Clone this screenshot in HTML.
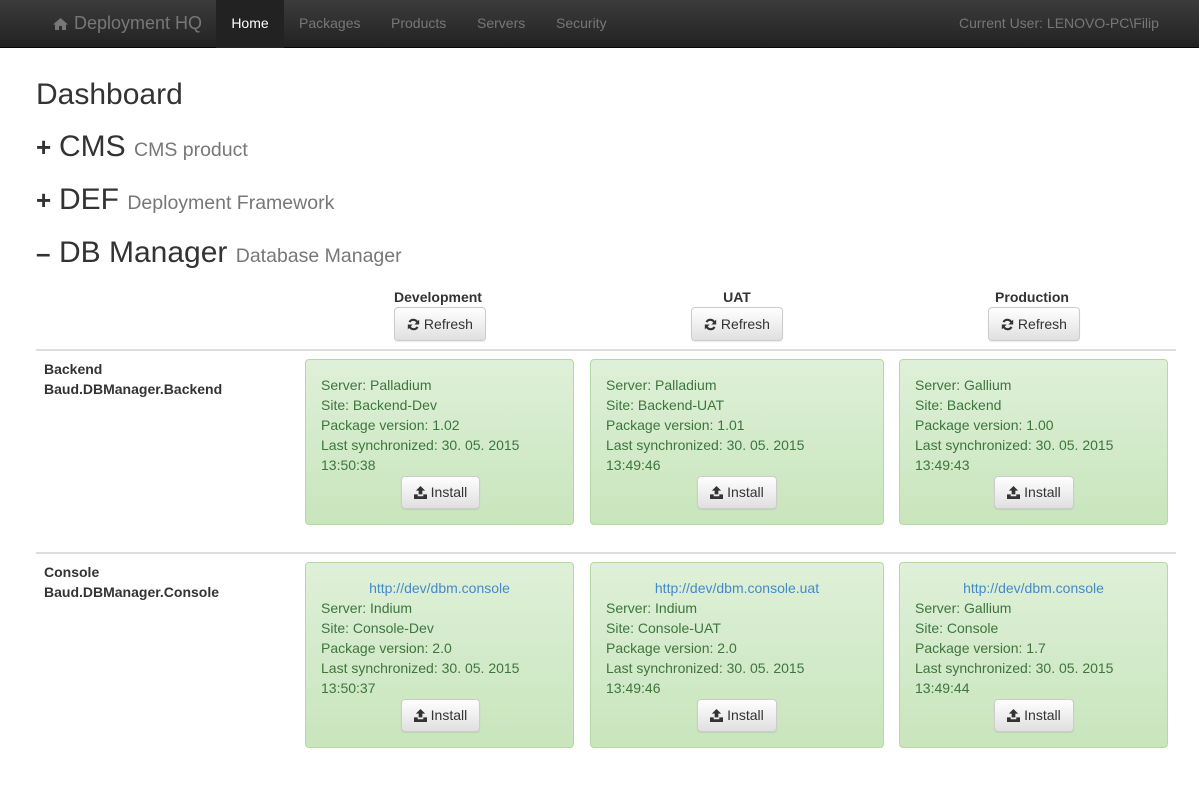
<!DOCTYPE html>
<html><head><meta charset="utf-8"><style>
*{box-sizing:border-box;margin:0;padding:0}
body{width:1199px;height:785px;background:#fff;font-family:"Liberation Sans",Arial,sans-serif;font-size:14px;color:#333;position:relative;overflow:hidden}
.nav{position:absolute;left:0;top:0;width:1199px;height:48px;background:linear-gradient(#3c3c3c,#222);border-bottom:1px solid #080808}
.nav span{position:absolute;top:0;line-height:47px;color:#777;font-size:14px}
h1{position:absolute;left:36px;top:78px;font-size:30px;font-weight:normal;color:#333;line-height:34px}
.h{position:absolute;left:36px;font-size:30px;line-height:34px;color:#333;white-space:nowrap}
.h small{font-size:19.5px;color:#777}
.h b{font-size:26px;display:inline-block;width:23px}
.col{position:absolute;top:288px;text-align:center;font-weight:bold;font-size:14px;line-height:18px}
.btn{position:absolute;background:linear-gradient(#fff,#e0e0e0);border:1px solid #ccc;border-radius:4px;box-shadow:0 1px 1px rgba(0,0,0,.08);font-size:14px;color:#333;text-align:center;font-weight:normal}
.line{position:absolute;left:36px;width:1140px;height:2px;background:#ddd}
.p{position:absolute;background:linear-gradient(#dff0d8,#c8e5bc);border:1px solid #b2dba1;border-radius:4px;color:#3c763d;line-height:20px;padding-left:15px}
.lk{text-align:center;color:#428bca;margin-left:-15px}
.lab{position:absolute;left:44px;font-weight:bold;line-height:20px}
svg{vertical-align:-2px}
</style></head><body>
<div class="nav">
<span style="left:52px;font-size:18px;"><svg width="17" height="14" viewBox="0 0 17 14"><path d="M8.5 1 L1 7.5 H3 V13 H7 V9 H10 V13 H14 V7.5 H16 Z" fill="#777"/></svg> Deployment HQ</span>
<span style="left:216px;width:68px;height:48px;background:#222;color:#fff;text-align:center">Home</span>
<span style="left:299px">Packages</span>
<span style="left:391px">Products</span>
<span style="left:477px">Servers</span>
<span style="left:556px">Security</span>
<span style="left:959px">Current User: LENOVO-PC\Filip</span>
</div>
<h1>Dashboard</h1>
<div class="h" style="top:130px"><b>+</b>CMS <small>CMS product</small></div>
<div class="h" style="top:183px"><b>+</b>DEF <small>Deployment Framework</small></div>
<div class="h" style="top:236px"><b>–</b>DB Manager <small>Database Manager</small></div>

<div class="col" style="left:378px;width:120px">Development</div>
<div class="col" style="left:677px;width:120px">UAT</div>
<div class="col" style="left:972px;width:120px">Production</div>
<div class="btn" style="left:394px;top:307px;width:92px;height:34px;line-height:32px"><svg width="13" height="13" viewBox="0 0 16 16"><path d="M13 6A5.5 5.5 0 0 0 3 5M3 10a5.5 5.5 0 0 0 10 1" stroke="#333" stroke-width="2.6" fill="none"/><path d="M15 2v6h-6zM1 14V8h6z" fill="#333"/></svg> Refresh</div>
<div class="btn" style="left:691px;top:307px;width:92px;height:34px;line-height:32px"><svg width="13" height="13" viewBox="0 0 16 16"><path d="M13 6A5.5 5.5 0 0 0 3 5M3 10a5.5 5.5 0 0 0 10 1" stroke="#333" stroke-width="2.6" fill="none"/><path d="M15 2v6h-6zM1 14V8h6z" fill="#333"/></svg> Refresh</div>
<div class="btn" style="left:988px;top:307px;width:92px;height:34px;line-height:32px"><svg width="13" height="13" viewBox="0 0 16 16"><path d="M13 6A5.5 5.5 0 0 0 3 5M3 10a5.5 5.5 0 0 0 10 1" stroke="#333" stroke-width="2.6" fill="none"/><path d="M15 2v6h-6zM1 14V8h6z" fill="#333"/></svg> Refresh</div>

<div class="line" style="top:349px"></div>
<div class="lab" style="top:359px">Backend<br>Baud.DBManager.Backend</div>
<div class="p" style="left:305px;top:359px;width:269px;height:166px;padding-top:15px">Server: Palladium<br>Site: Backend-Dev<br>Package version: 1.02<br>Last synchronized: 30. 05. 2015<br>13:50:38</div>
<div class="p" style="left:590px;top:359px;width:294px;height:166px;padding-top:15px">Server: Palladium<br>Site: Backend-UAT<br>Package version: 1.01<br>Last synchronized: 30. 05. 2015<br>13:49:46</div>
<div class="p" style="left:899px;top:359px;width:269px;height:166px;padding-top:15px">Server: Gallium<br>Site: Backend<br>Package version: 1.00<br>Last synchronized: 30. 05. 2015<br>13:49:43</div>

<div class="line" style="top:552px"></div>
<div class="lab" style="top:562px">Console<br>Baud.DBManager.Console</div>
<div class="p" style="left:305px;top:562px;width:269px;height:186px;padding-top:15px"><div class="lk">http://dev/dbm.console</div>Server: Indium<br>Site: Console-Dev<br>Package version: 2.0<br>Last synchronized: 30. 05. 2015<br>13:50:37</div>
<div class="p" style="left:590px;top:562px;width:294px;height:186px;padding-top:15px"><div class="lk">http://dev/dbm.console.uat</div>Server: Indium<br>Site: Console-UAT<br>Package version: 2.0<br>Last synchronized: 30. 05. 2015<br>13:49:46</div>
<div class="p" style="left:899px;top:562px;width:269px;height:186px;padding-top:15px"><div class="lk">http://dev/dbm.console</div>Server: Gallium<br>Site: Console<br>Package version: 1.7<br>Last synchronized: 30. 05. 2015<br>13:49:44</div>

<div class="btn" style="left:401px;top:476px;width:79px;height:33px;line-height:31px"><svg width="13" height="13" viewBox="0 0 14 14"><path d="M7 0L2 5h3v4h4V5h3z M0 9h4v2h6V9h4v5H0z" fill="#333"/></svg> Install</div>
<div class="btn" style="left:697px;top:476px;width:80px;height:33px;line-height:31px"><svg width="13" height="13" viewBox="0 0 14 14"><path d="M7 0L2 5h3v4h4V5h3z M0 9h4v2h6V9h4v5H0z" fill="#333"/></svg> Install</div>
<div class="btn" style="left:994px;top:476px;width:80px;height:33px;line-height:31px"><svg width="13" height="13" viewBox="0 0 14 14"><path d="M7 0L2 5h3v4h4V5h3z M0 9h4v2h6V9h4v5H0z" fill="#333"/></svg> Install</div>
<div class="btn" style="left:401px;top:699px;width:79px;height:33px;line-height:31px"><svg width="13" height="13" viewBox="0 0 14 14"><path d="M7 0L2 5h3v4h4V5h3z M0 9h4v2h6V9h4v5H0z" fill="#333"/></svg> Install</div>
<div class="btn" style="left:697px;top:699px;width:80px;height:33px;line-height:31px"><svg width="13" height="13" viewBox="0 0 14 14"><path d="M7 0L2 5h3v4h4V5h3z M0 9h4v2h6V9h4v5H0z" fill="#333"/></svg> Install</div>
<div class="btn" style="left:994px;top:699px;width:80px;height:33px;line-height:31px"><svg width="13" height="13" viewBox="0 0 14 14"><path d="M7 0L2 5h3v4h4V5h3z M0 9h4v2h6V9h4v5H0z" fill="#333"/></svg> Install</div>
</body></html>
